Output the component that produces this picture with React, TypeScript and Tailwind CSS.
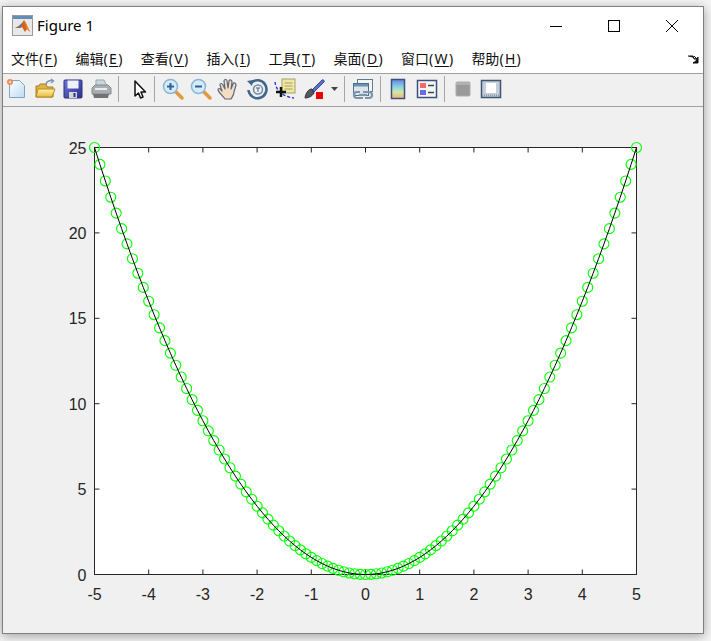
import type { ReactNode } from "react";

const menus = [
  ["文件", "F"],
  ["编辑", "E"],
  ["查看", "V"],
  ["插入", "I"],
  ["工具", "T"],
  ["桌面", "D"],
  ["窗口", "W"],
  ["帮助", "H"],
];

const Tool = ({ children }: { children: ReactNode }) => (
  <div className="flex w-[28px] items-center justify-center">
    <svg width="24" height="24" viewBox="0 0 24 24">
      {children}
    </svg>
  </div>
);

const Sep = ({ className }: { className: string }) => (
  <div className={`h-[26px] w-px bg-[#a6a6a6] ${className}`} />
);

const MatlabLogo = () => (
  <svg width="21" height="21" viewBox="0 0 21 21">
    <rect x="0.5" y="0.5" width="20" height="20" fill="#e8e8e8" stroke="#9a9a9a" />
    <rect x="1" y="1" width="19" height="3" fill="#5f8fb8" />
    <path d="M3 13l4-2 3-3 2-3 2 3 4 9-3-3-2 3-3-5-2 1z" fill="#d9601a" />
    <path d="M3 13l4-2 3-3-1 5-2-1z" fill="#3f7fb0" />
    <path d="M12 5l2 3 4 9-3-3z" fill="#e8902a" />
  </svg>
);

const Plot = () => {
  const px = (x: number) => 94.5 + (x + 5) * 54.2;
  const py = (y: number) => 574.5 - y * 17.08;
  const points = Array.from({ length: 101 }, (_, i) => {
    const x = -5 + i * 0.1;
    return { x: px(x), y: py(x * x) };
  });
  const xTicks = [-5, -4, -3, -2, -1, 0, 1, 2, 3, 4, 5];
  const yTicks = [0, 5, 10, 15, 20, 25];

  return (
    <svg
      width="700"
      height="526"
      viewBox="3 107 700 526"
      className="block font-['Liberation_Sans',sans-serif]"
    >
      <rect x="94.5" y="147.5" width="542" height="427" fill="#fff" stroke="#262626" />
      {xTicks.map((t) => (
        <g key={t}>
          <path
            d={`M${px(t)} 574.5v-5M${px(t)} 147.5v5`}
            stroke="#262626"
            fill="none"
          />
          <text x={px(t)} y="600" textAnchor="middle" fontSize="16" fill="#262626">
            {t}
          </text>
        </g>
      ))}
      {yTicks.map((t) => (
        <g key={t}>
          <path
            d={`M94.5 ${py(t)}h5M636.5 ${py(t)}h-5`}
            stroke="#262626"
            fill="none"
          />
          <text x="86.5" y={py(t) + 6} textAnchor="end" fontSize="16" fill="#262626">
            {t}
          </text>
        </g>
      ))}
      {points.map((p, i) => (
        <circle key={i} cx={p.x} cy={p.y} r="5" fill="none" stroke="#00ff00" strokeWidth="1.1" />
      ))}
      <polyline
        points={points.map((p) => `${p.x},${p.y}`).join(" ")}
        fill="none"
        stroke="#000"
        strokeWidth="1"
      />
    </svg>
  );
};

export default function App() {
  return (
    <div className="h-[641px] w-[711px] overflow-hidden bg-[#f4f4f4] pl-[2px] pt-[6px]">
      <div className="flex h-[628px] w-[702px] flex-col border border-[#7f7f7f] bg-[#f0f0f0] shadow-[0_2px_10px_rgba(0,0,0,0.35)] font-['Noto_Sans','Noto_Sans_CJK_SC',sans-serif]">
        {/* title bar */}
        <div className="flex h-[37px] items-center bg-white pl-[9px]">
          <MatlabLogo />
          <span className="ml-[4px] text-[15px] text-black">Figure 1</span>
          <div className="ml-auto mr-[2px] flex">
            <div className="flex h-[37px] w-[58px] items-center justify-center">
              <svg width="14" height="14" viewBox="0 0 14 14">
                <path d="M1 7.5h12" stroke="#000" />
              </svg>
            </div>
            <div className="flex h-[37px] w-[58px] items-center justify-center">
              <svg width="14" height="14" viewBox="0 0 14 14">
                <rect x="1.5" y="1.5" width="11" height="11" fill="none" stroke="#000" />
              </svg>
            </div>
            <div className="flex h-[37px] w-[58px] items-center justify-center">
              <svg width="14" height="14" viewBox="0 0 14 14">
                <path d="M1 1l12 12M13 1L1 13" stroke="#000" />
              </svg>
            </div>
          </div>
        </div>
        {/* menu bar */}
        <div className="flex h-[30px] items-center gap-[17px] border-b border-[#a0a0a0] bg-white pl-[8px] text-[14px] text-[#111]">
          {menus.map(([label, key]) => (
            <span key={key} className="whitespace-nowrap">
              {label}
              <span className="tracking-[1.3px]">
                (<span className="underline underline-offset-2">{key}</span>)
              </span>
            </span>
          ))}
          <svg width="12" height="10" viewBox="0 0 12 10" className="ml-auto mr-[4px]">
            <path d="M1 2h5l1 3h3M7 2l3 3M9 7l2-4v6H6z" fill="#111" stroke="#111" />
          </svg>
        </div>
        {/* toolbar */}
        <div className="flex h-[33px] items-center border-b border-[#a0a0a0] bg-[#f0f0f0] pb-[2px]">
          <Tool>
            <defs>
              <linearGradient id="page" x1="0" y1="0" x2="1" y2="1">
                <stop offset="0" stopColor="#ffffff" />
                <stop offset="1" stopColor="#bcdcf2" />
              </linearGradient>
            </defs>
            <path d="M4.5 3.5h10l5 5v12h-15z" fill="url(#page)" stroke="#7ba6c8" />
            <circle cx="5" cy="5" r="3" fill="#f08c50" />
            <circle cx="5" cy="5" r="1.2" fill="#f7d9c0" />
          </Tool>
          <Tool>
            <defs>
              <linearGradient id="fold" x1="0" y1="0" x2="0" y2="1">
                <stop offset="0" stopColor="#fff3b0" />
                <stop offset="1" stopColor="#eab93a" />
              </linearGradient>
            </defs>
            <path d="M13 7c1-3 4-4 7-3M18 2l2.500 2-2.500 2" fill="none" stroke="#7d97ab" strokeWidth="1.500" />
            <path d="M3 20V9h3l1-2h6l1 3h6v10z" fill="#e2b443" stroke="#a67f22" />
            <path d="M3 20l2-8h17l-3 8z" fill="url(#fold)" stroke="#b38a25" />
          </Tool>
          <Tool>
            <defs>
              <linearGradient id="disk" x1="0" y1="0" x2="1" y2="1">
                <stop offset="0" stopColor="#6f78d8" />
                <stop offset="1" stopColor="#2a2f8a" />
              </linearGradient>
            </defs>
            <rect x="3" y="3" width="18" height="18" rx="1" fill="url(#disk)" stroke="#2b2f7e" />
            <rect x="6.500" y="3.500" width="11" height="8" fill="#eef0fa" />
            <rect x="8" y="15" width="8" height="6" fill="#d4d6de" />
            <rect x="12.500" y="16" width="2" height="4" fill="#2b2f7e" />
          </Tool>
          <Tool>
            <path d="M7 3h8l3 6H7z" fill="#c9d6de" stroke="#97a7b2" />
            <path d="M3 11l3-3h13l3 3v6H3z" fill="#a9aeb0" stroke="#85898b" />
            <path d="M4 17h16l-1 4H5z" fill="#6f7476" />
            <rect x="6" y="11" width="12" height="2" fill="#e8ecee" />
          </Tool>
          <Sep className="ml-[3px] mr-[6px]" />
          <Tool>
            <path d="M8 4v15l3.500-3 2 5 2.500-1-2-5h4.500z" fill="#fff" stroke="#111" strokeWidth="1.500" strokeLinejoin="round" />
          </Tool>
          <Sep className="ml-px mr-[4px]" />
          <Tool>
            <path d="M14 14l7 7" stroke="#e09a3c" strokeWidth="3.500" strokeLinecap="round" />
            <circle cx="9.500" cy="9.500" r="7" fill="#d4ecf8" stroke="#8ab4d4" strokeWidth="1.500" />
            <path d="M6 9.500h7M9.500 6v7" stroke="#2f5f9c" strokeWidth="2" />
          </Tool>
          <Tool>
            <path d="M14 14l7 7" stroke="#e09a3c" strokeWidth="3.500" strokeLinecap="round" />
            <circle cx="9.500" cy="9.500" r="7" fill="#d4ecf8" stroke="#8ab4d4" strokeWidth="1.500" />
            <path d="M6 9.500h7" stroke="#2f5f9c" strokeWidth="2" />
          </Tool>
          <Tool>
            <path
              d="M8 22c-2-3-6-6-7-9 0-2 2-2 3 0l1 1-2-6c0-2 2-2 3 0l2 4-1-8c0-2 3-2 3 0l1 7 1-7c1-2 3-1 3 1l-1 7 2-5c1-2 3-1 3 1l-2 7c0 3-2 5-3 7z"
              fill="#f7dcc4"
              stroke="#5a6a7c"
              strokeWidth="1.200"
              strokeLinejoin="round"
            />
          </Tool>
          <Tool>
            <path d="M6 6a9 9 0 1 1-2.500 7" fill="none" stroke="#41658f" strokeWidth="2.600" />
            <path d="M2 4l6-1-1 6z" fill="#41658f" />
            <circle cx="13" cy="12.500" r="4.500" fill="none" stroke="#6d8aac" strokeWidth="1.500" />
            <path d="M11 11h4M13 11v4" stroke="#41658f" />
          </Tool>
          <Tool>
            <rect x="9" y="2" width="13" height="14" fill="#efe7a4" stroke="#a3a06a" />
            <path d="M11.500 6h8M11.500 9h8M11.500 12h8" stroke="#a8a267" />
            <path d="M2 5c1 7 5 14 19 16" fill="none" stroke="#2222dd" strokeDasharray="3 2" strokeWidth="1.300" />
            <path d="M3 15h10M8 10v10" stroke="#111" strokeWidth="2.500" />
          </Tool>
          <div className="ml-px">
            <Tool>
              <path d="M10 13L20 3c1-1 3 1 2 2L12 15z" fill="#5f6fd0" stroke="#3b4690" />
              <path d="M10 12c-3 0-6 3-7 9 2 0 7-1 9-5z" fill="#55595e" stroke="#2c2f33" />
              <rect x="14" y="15" width="7" height="7" fill="#f00000" />
            </Tool>
          </div>
          <svg width="7" height="4" viewBox="0 0 7 4" className="ml-[3px]">
            <path d="M0 0h7L3.500 4z" fill="#444" />
          </svg>
          <Sep className="ml-[6px] mr-[4px]" />
          <Tool>
            <rect x="6.500" y="2.500" width="15" height="12" fill="#f2f5f8" stroke="#5d7a97" />
            <rect x="2.500" y="6.500" width="15" height="12" fill="#dde6ee" stroke="#4f6e8d" />
            <rect x="3" y="7" width="14" height="2.500" fill="#6d8fb0" />
            <path d="M9 15h-3a3 3 0 0 0 0 6h6M14 21h4a3 3 0 0 0 0-6h-6" fill="none" stroke="#7e94a8" strokeWidth="2.200" />
            <path d="M8 18h8" stroke="#7e94a8" strokeWidth="2.200" />
          </Tool>
          <Sep className="ml-[3px] mr-[3px]" />
          <Tool>
            <defs>
              <linearGradient id="cbar" x1="0" y1="0" x2="0" y2="1">
                <stop offset="0" stopColor="#6f7fd8" />
                <stop offset="0.35" stopColor="#7fd0e8" />
                <stop offset="0.65" stopColor="#cfe8a8" />
                <stop offset="1" stopColor="#f2b27a" />
              </linearGradient>
            </defs>
            <rect x="5.500" y="2.500" width="13" height="19" fill="url(#cbar)" stroke="#3d4f7c" strokeWidth="1.500" />
          </Tool>
          <div className="ml-px">
            <Tool>
              <rect x="2.500" y="3.500" width="19" height="17" fill="#f4f6f8" stroke="#3d4f7c" strokeWidth="1.500" />
              <rect x="5" y="6" width="6" height="5" fill="#f06a6a" />
              <rect x="5" y="13" width="6" height="5" fill="#6a6af0" />
              <path d="M13 8.500h6M13 15.500h6" stroke="#444" strokeWidth="1.500" />
            </Tool>
          </div>
          <Sep className="ml-[3px] mr-[4px]" />
          <Tool>
            <rect x="5" y="5" width="14" height="14" rx="1" fill="#9a9a9a" stroke="#adadad" />
            <rect x="5" y="5" width="14" height="3" fill="#b0b0b0" />
          </Tool>
          <Tool>
            <rect x="2.500" y="3.500" width="19" height="17" fill="#c5ced8" stroke="#3d5472" strokeWidth="1.500" />
            <rect x="7" y="6" width="10" height="10" fill="#fff" />
            <path d="M3 18.500h18" stroke="#8d98a3" strokeWidth="2" strokeDasharray="1 1" />
          </Tool>
        </div>
        {/* figure area */}
        <div className="flex-1 overflow-hidden">
          <Plot />
        </div>
      </div>
    </div>
  );
}
